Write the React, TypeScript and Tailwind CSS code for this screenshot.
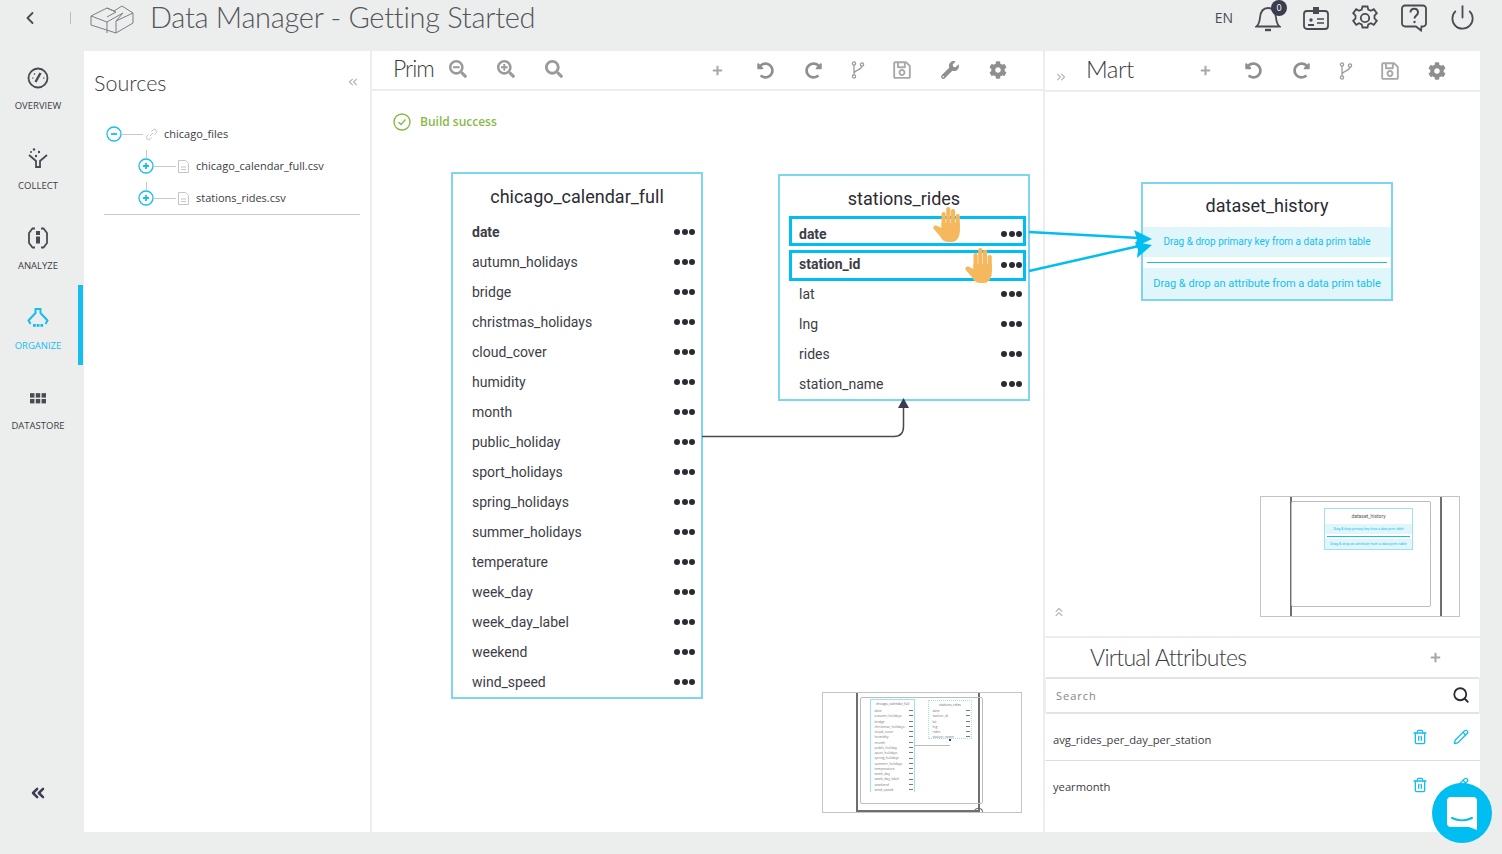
import React from "react";
import {
    FaCog,
    FaPlus,
    FaRedoAlt,
    FaRegSave,
    FaSearch,
    FaSearchMinus,
    FaSearchPlus,
    FaUndoAlt,
    FaWrench,
} from "react-icons/fa";
import { ChevronLeft, ChevronsLeft, ChevronsRight, ChevronsUp, Power, Search, Trash2, Pencil } from "lucide-react";

const calendarCols = [
    "date",
    "autumn_holidays",
    "bridge",
    "christmas_holidays",
    "cloud_cover",
    "humidity",
    "month",
    "public_holiday",
    "sport_holidays",
    "spring_holidays",
    "summer_holidays",
    "temperature",
    "week_day",
    "week_day_label",
    "weekend",
    "wind_speed",
];
const ridesCols = ["date", "station_id", "lat", "lng", "rides", "station_name"];

function Dots() {
    return (
        <div className="flex gap-[1.5px]">
            <span className="w-[6px] h-[6px] rounded-full bg-[#2b2b33]" />
            <span className="w-[6px] h-[6px] rounded-full bg-[#2b2b33]" />
            <span className="w-[6px] h-[6px] rounded-full bg-[#2b2b33]" />
        </div>
    );
}

function BranchIcon() {
    return (
        <svg width="14" height="18" viewBox="0 0 14 18" fill="none" stroke="#9b9b9b" strokeWidth="1.3">
            <circle cx="3" cy="2.5" r="1.6" />
            <circle cx="11" cy="3.5" r="1.6" />
            <circle cx="3" cy="15.5" r="1.6" />
            <path d="M3 4.1V13.9M11 5.1C11 9 4 8.5 3 12" />
        </svg>
    );
}

function Hand() {
    return (
        <svg width="32" height="36" viewBox="0 0 32 36" fill="#f6b85c">
            <rect x="9.500" y="6" width="4.200" height="20" rx="2.100" />
            <rect x="14.200" y="1" width="4.200" height="24" rx="2.100" />
            <rect x="18.900" y="3" width="4.200" height="22" rx="2.100" />
            <rect x="23.600" y="8" width="4.200" height="18" rx="2.100" />
            <path d="M9.500 17h18.300v8c0 6-3 11-8 11h-4c-4 0-6-3-8-6l-6-7c-1.500-2 1-4.500 3.500-3l4.200 2z" />
        </svg>
    );
}

function NodeRow({ name, bold, boxed, extra }: { name: string; bold?: boolean; boxed?: boolean; extra?: string }) {
    return (
        <div
            className={`flex items-center justify-between h-[30px] text-[14px] text-[#3d3d47] ${
                bold ? "font-bold" : ""
            } ${boxed ? "ml-[9px] mr-[2px] border-[3px] border-[#00bdf2] pl-[7px] pr-[1px]" : "pl-[19px] pr-[6px]"} ${extra ?? ""}`}
        >
            <span>{name}</span>
            <Dots />
        </div>
    );
}

function Toolbar({ wrench }: { wrench?: boolean }) {
    return (
        <>
            <FaPlus size={11} className="text-[#a8a8a8]" />
            <FaUndoAlt size={17} className="text-[#8f8f8f] ml-[34px]" />
            <FaRedoAlt size={17} className="text-[#8f8f8f] ml-[31px]" />
            <div className="ml-[29px]">
                <BranchIcon />
            </div>
            <FaRegSave size={20} className="text-[#a8a8a8] ml-[27px]" />
            {wrench && <FaWrench size={18} className="text-[#8f8f8f] ml-[29px]" />}
            <FaCog size={18} className={`text-[#8f8f8f] ${wrench ? "ml-[30px]" : "ml-[28px]"}`} />
        </>
    );
}

function OverviewIcon() {
    return (
        <svg width="22" height="22" viewBox="0 0 22 22" fill="none" stroke="#4a4a52" strokeWidth="1.8">
            <circle cx="11" cy="11" r="9.500" />
            <path d="M8.500 15L13.500 6" strokeWidth="2.400" />
            <path d="M5 11h1.500M7 6.500l1 1M16 11h1.500" strokeWidth="1.200" />
        </svg>
    );
}

function CollectIcon() {
    return (
        <svg width="22" height="22" viewBox="0 0 22 22" fill="none" stroke="#4a4a52" strokeWidth="1.800">
            <path d="M2 8l7 6v6h4v-6l7-6" />
            <circle cx="7" cy="2.500" r="1.200" fill="#4a4a52" stroke="none" />
            <circle cx="12" cy="5" r="1.200" fill="#4a4a52" stroke="none" />
            <circle cx="9" cy="9" r="1.200" fill="#4a4a52" stroke="none" />
            <circle cx="4" cy="5" r="1" fill="#4a4a52" stroke="none" />
        </svg>
    );
}

function AnalyzeIcon() {
    return (
        <svg width="20" height="22" viewBox="0 0 20 22" fill="none" stroke="#4a4a52" strokeWidth="1.800">
            <path d="M7 1.500H4.500L1 6v10l3.500 4.500H7M13 1.500h2.500L19 6v10l-3.500 4.500H13" />
            <rect x="8" y="4" width="4" height="4" fill="#4a4a52" stroke="none" />
            <rect x="8" y="9.500" width="4" height="7" fill="#4a4a52" stroke="none" />
        </svg>
    );
}

function OrganizeIcon() {
    return (
        <svg width="22" height="22" viewBox="0 0 22 22" fill="none" stroke="#18bdf0" strokeWidth="2">
            <path d="M7.500 2h7M8.500 2v4L1.500 13.500 3.500 17M13.500 2v4l7 7.500-2 3.500" />
            <rect x="6" y="17" width="2.800" height="2.800" fill="#18bdf0" stroke="none" />
            <rect x="9.700" y="17" width="2.800" height="2.800" fill="#18bdf0" stroke="none" />
            <rect x="13.400" y="17" width="2.800" height="2.800" fill="#18bdf0" stroke="none" />
        </svg>
    );
}

function DatastoreIcon() {
    return (
        <svg width="16" height="11" viewBox="0 0 18 12" fill="#4a4a52">
            <rect x="0" y="0" width="5" height="5" />
            <rect x="6.500" y="0" width="5" height="5" />
            <rect x="13" y="0" width="5" height="5" />
            <rect x="0" y="6.500" width="5" height="5" />
            <rect x="6.500" y="6.500" width="5" height="5" />
            <rect x="13" y="6.500" width="5" height="5" />
        </svg>
    );
}

function SideItem({ label, icon, active }: { label: string; icon: React.ReactNode; active?: boolean }) {
    return (
        <div className="flex h-[80px] w-[83px]">
            <div
                className={`w-[76px] flex flex-col items-center pt-[22px] text-[9.500px] leading-[14px] ${
                    active ? "text-[#18bdf0]" : "text-[#3c3c44]"
                }`}
            >
                <div className="h-[22px] flex items-center">{icon}</div>
                <span className="mt-[10px]">{label}</span>
            </div>
            {active && <div className="ml-[2px] w-[5px] bg-[#18bdf0]" />}
        </div>
    );
}

function Circle({ minus }: { minus?: boolean }) {
    return (
        <svg width="16" height="16" viewBox="0 0 16 16" fill="none">
            <circle cx="8" cy="8" r="7" stroke="#18bdf0" strokeWidth="1.300" />
            <path d={minus ? "M5 8h6" : "M5 8h6M8 5v6"} stroke="#18bdf0" strokeWidth="1.800" />
        </svg>
    );
}

function FileIcon() {
    return (
        <svg width="11" height="13" viewBox="0 0 11 13" fill="none" stroke="#c4c4c4">
            <path d="M.5.5h7l3 3v9H.500zM3 7h5M3 9.500h5" />
        </svg>
    );
}

function TreeRow({ name }: { name: string }) {
    return (
        <div className="relative flex items-center h-[32px] pl-[34px]">
            <div className="absolute left-[42px] top-0 w-px h-[8px] bg-[#c8c8c8]" />
            <Circle />
            <div className="w-[22px] h-px bg-[#c8c8c8]" />
            <div className="ml-[2px]">
                <FileIcon />
            </div>
            <span className="ml-[7px]">{name}</span>
        </div>
    );
}

function MiniMap({ className, children }: { className: string; children: React.ReactNode }) {
    return <div className={`absolute w-[200px] h-[121px] border border-[#c4c4c4] bg-white ${className}`}>{children}</div>;
}

function MiniRows({ names }: { names: string[] }) {
    return (
        <div className="pl-[3.500px] pr-[1px]">
            {names.map((n) => (
                <div key={n} className="flex items-center justify-between h-[5.270px] text-[3.400px] leading-[5.270px] text-[#77777c]">
                    <span>{n}</span>
                    <div className="w-[4px] h-px bg-[#77777c]" />
                </div>
            ))}
        </div>
    );
}

export default function App() {
    const bodyFont = { fontFamily: '"Open Sans", sans-serif' };
    const thinFont = "font-['Lato',sans-serif] font-light";
    const rootClass = "relative w-[1502px] h-[854px] overflow-hidden bg-[#eceeee] text-[#3c3c44]";

    return (
        <div className={rootClass} style={bodyFont}>
            {/* top bar */}
            <header className="flex items-center h-[51px] pb-[16px]">
                <ChevronLeft size={20} strokeWidth={2.200} className="ml-[20px] text-[#4a4a52]" />
                <div className="ml-[30px] w-px h-[12px] bg-[#bdbdbd]" />
                <svg className="ml-[19px]" width="44" height="32" viewBox="0 0 44 32" fill="none" stroke="#7d7d83" strokeWidth="1">
                    <path d="M1 14L17 6l7 3 8-5 11 7v10L26 31 1 23zM1 14l16 6v11M17 20l16-9M26 31V19l17-8M17 6l9 4-9 5M33 11l-7 8" />
                </svg>
                <h1 className={`ml-[16px] text-[29px] leading-[36px] tracking-[-0.3px] whitespace-nowrap text-[#55555b] -mt-[2px] ${thinFont}`}>
                    Data Manager - Getting Started
                </h1>
                <div className="ml-auto flex items-center pr-[26px] text-[#4a4a52]">
                    <span className="text-[14px]">EN</span>
                    <div className="relative ml-[22px]">
                        <svg width="26" height="28" viewBox="0 0 26 28" fill="none" stroke="#4a4a52" strokeWidth="1.800">
                            <path d="M1.500 22.500c2.500-2 3-4 3.500-9C5.500 8 8 4 13 4s7.500 4 8 9.500c.5 5 1 7 3.500 9z" />
                            <path d="M10 26h6" strokeWidth="2.400" />
                        </svg>
                        <div className="absolute -top-[4px] -right-[6px] w-[16px] h-[16px] rounded-full bg-[#3c3c50] text-white text-[9px] leading-[16px] text-center">
                            0
                        </div>
                    </div>
                    <svg className="ml-[22px]" width="26" height="26" viewBox="0 0 26 26" fill="none" stroke="#4a4a52" strokeWidth="1.800">
                        <rect x="1" y="6" width="24" height="18" rx="3" />
                        <rect x="10" y="2" width="6" height="7" fill="#4a4a52" stroke="none" />
                        <circle cx="8" cy="15" r="1.700" fill="#4a4a52" stroke="none" />
                        <path d="M5 20h6" strokeWidth="2" />
                        <path d="M14 14h7M14 18h7" strokeWidth="1.300" />
                    </svg>
                    <svg className="ml-[23px]" width="26" height="26" viewBox="0 0 26 26" fill="none" stroke="#4a4a52" strokeWidth="1.800">
                        <path d="M10.500 1.500h5l.8 3.200 2.600 1.100 2.900-1.600 3 4-2.300 2.300v3l2.300 2.300-3 4-2.900-1.600-2.600 1.100-.8 3.200h-5l-.8-3.200-2.600-1.100-2.900 1.600-3-4 2.300-2.300v-3L1.200 8.200l3-4 2.900 1.600 2.600-1.100z" />
                        <circle cx="13" cy="13" r="4.200" />
                    </svg>
                    <svg className="ml-[23px]" width="26" height="28" viewBox="0 0 26 28" fill="none" stroke="#4a4a52" strokeWidth="1.800">
                        <path d="M4 1.500h18a3 3 0 0 1 3 3v15a3 3 0 0 1-3 3h-1.500l-.5 4-5-4H4a3 3 0 0 1-3-3v-15a3 3 0 0 1 3-3z" />
                        <path d="M9.500 8.500c0-5 7.500-5 7.500 0 0 3-3.500 3-3.500 6" strokeWidth="2" />
                        <circle cx="13.500" cy="18" r="1.200" fill="#4a4a52" stroke="none" />
                    </svg>
                    <Power size={27} strokeWidth={1.600} className="ml-[22px]" />
                </div>
            </header>

            <div className="flex">
                {/* sidebar */}
                <nav className="relative w-[84px] h-[781px] shrink-0">
                    <div className="-mt-[6px]">
                        <SideItem label="OVERVIEW" icon={<OverviewIcon />} />
                        <SideItem label="COLLECT" icon={<CollectIcon />} />
                        <SideItem label="ANALYZE" icon={<AnalyzeIcon />} />
                        <SideItem label="ORGANIZE" icon={<OrganizeIcon />} active />
                        <SideItem label="DATASTORE" icon={<DatastoreIcon />} />
                    </div>
                    <ChevronsLeft size={20} strokeWidth={3} className="absolute left-[28px] top-[732px] text-[#3c3c50]" />
                </nav>

                {/* sources */}
                <section className="w-[286px] h-[781px] bg-white shrink-0">
                    <div className="flex items-center justify-between h-[64px] pl-[10px] pr-[10px]">
                        <h2 className={`text-[21.500px] text-[#3c3c44] mt-[1px] ${thinFont}`}>Sources</h2>
                        <ChevronsLeft size={14} className="text-[#b4b4b4] -mt-[2px]" />
                    </div>
                    <div className="mx-[20px] mt-[3px] w-[256px] border-b border-[#c8c8c8] text-[11px] text-[#3c3c44]">
                        <div className="flex items-center h-[32px] pl-[2px]">
                            <Circle minus />
                            <div className="w-[21px] h-px bg-[#c8c8c8]" />
                            <svg className="ml-[2px]" width="13" height="13" viewBox="0 0 13 13" fill="none" stroke="#c4c4c4">
                                <path d="M5 8l3-3M3.500 6.500L2 8a2 2 0 0 0 3 3l1.500-1.500M6.500 3.500L8 2a2 2 0 0 1 3 3L9.500 6.500" />
                            </svg>
                            <span className="ml-[6px]">chicago_files</span>
                        </div>
                        <TreeRow name="chicago_calendar_full.csv" />
                        <TreeRow name="stations_rides.csv" />
                    </div>
                </section>

                {/* prim */}
                <section className="w-[671px] h-[781px] ml-[2px] bg-white shrink-0 flex flex-col">
                    <div className="flex items-center h-[38px] pl-[21px] shrink-0">
                        <span className={`text-[23px] tracking-[-1px] w-[54px] -mt-[3px] ${thinFont}`}>Prim</span>
                        <FaSearchMinus size={18} className="text-[#9b9b9b] ml-[2px] -mt-[2px]" />
                        <FaSearchPlus size={18} className="text-[#9b9b9b] ml-[30px] -mt-[2px]" />
                        <FaSearch size={18} className="text-[#9b9b9b] ml-[30px] -mt-[2px]" />
                        <div className="ml-[149px] flex items-center">
                            <Toolbar wrench />
                        </div>
                    </div>
                    <div className="h-[2px] bg-[#eceeee] shrink-0" />
                    <div className="relative flex-1">
                        <div className="flex items-center pl-[21px] pt-[22px] gap-[9px]">
                            <svg width="18" height="18" viewBox="0 0 18 18" fill="none" stroke="#8ab84a" strokeWidth="1.400">
                                <circle cx="9" cy="9" r="8" />
                                <path d="M5.500 9.200L8 11.500l4.500-5" />
                            </svg>
                            <span className="text-[12px] font-semibold text-[#8ab84a]">Build success</span>
                        </div>

                        <div className="absolute left-[79px] top-[81px] w-[252px] h-[527px] border-2 border-[#7dd6f0] font-['Roboto',sans-serif]">
                            <div className="h-[43px] pt-[11px] text-center text-[18px] leading-[24px] text-[#2b2b33]">chicago_calendar_full</div>
                            {calendarCols.map((c, i) => (
                                <NodeRow key={c} name={c} bold={i === 0} />
                            ))}
                        </div>

                        <div className="absolute left-[406px] top-[83px] w-[252px] h-[227px] border-2 border-[#7dd6f0] font-['Roboto',sans-serif]">
                            <div className="h-[40px] pt-[11px] text-center text-[18px] leading-[24px] text-[#2b2b33]">stations_rides</div>
                            <div className="flex flex-col gap-[4px] -mb-[2px]">
                                <NodeRow name="date" bold boxed extra="pt-[6px]" />
                                <NodeRow name="station_id" bold boxed extra="pb-[2px] !h-[31px]" />
                            </div>
                            {ridesCols.slice(2).map((c) => (
                                <NodeRow key={c} name={c} />
                            ))}
                        </div>

                        {/* link between the two prim tables */}
                        <svg className="absolute left-[330px] top-[304px]" width="210" height="50" viewBox="0 0 210 50" fill="none">
                            <path d="M0 41.500h192q9.500 0 9.500-10V12" stroke="#4a4a55" strokeWidth="1.500" />
                            <path d="M201.500 3l5.500 10h-11z" fill="#3c3c50" />
                        </svg>

                        <div className="absolute left-[560px] top-[115px]">
                            <Hand />
                        </div>
                        <div className="absolute left-[592px] top-[156px]">
                            <Hand />
                        </div>

                        <MiniMap className="left-[450px] top-[601px]">
                            <div className="absolute left-[33px] top-0 w-[2px] h-full bg-[#6e6e74]" />
                            <div className="absolute left-[155px] top-0 w-[2px] h-full bg-[#6e6e74]" />
                            <div className="absolute left-[37px] top-[4px] w-[123px] h-[107px] border border-[#bdbdbd] rounded-[2px]" />
                            <div className="absolute left-[47px] top-[6px] w-[45px] h-[93px] border-x border-t border-[#9fe0f3]">
                                <div className="text-center text-[3.400px] leading-[8px] text-[#666]">chicago_calendar_full</div>
                                <MiniRows names={calendarCols} />
                            </div>
                            <div className="absolute left-[105px] top-[7px] w-[44px] h-[39px] border border-dotted border-[#9fe0f3]">
                                <div className="text-center text-[3.400px] leading-[7px] text-[#666]">stations_rides</div>
                                <MiniRows names={ridesCols} />
                            </div>
                            <div className="absolute left-[92px] top-[52px] w-[35px] h-[2px] border-t border-[#bdbdbd]" />
                            <div className="absolute left-[126px] top-[46px] w-[2px] h-[2px] bg-[#3c3c50]" />
                            <div className="absolute left-[151px] bottom-0 w-[9px] h-[4px] rounded-t-full border border-b-0 border-[#6e6e74]" />
                            <div className="absolute left-[33px] bottom-0 w-[124px] h-[2px] bg-[#6e6e74]" />
                        </MiniMap>
                    </div>
                </section>

                {/* mart */}
                <section className="w-[435px] h-[781px] ml-[2px] bg-white shrink-0 flex flex-col">
                    <div className="flex items-center h-[39px] pl-[9px] shrink-0">
                        <ChevronsRight size={14} className="text-[#b4b4b4] mt-[12px]" />
                        <span className={`ml-[18px] w-[48px] text-[24px] tracking-[-0.5px] -mt-[3px] ${thinFont}`}>Mart</span>
                        <div className="ml-[66px] flex items-center">
                            <Toolbar />
                        </div>
                    </div>
                    <div className="h-[2px] bg-[#eceeee] shrink-0" />
                    <div className="relative h-[544px] shrink-0">
                        <div className="absolute left-[96px] top-[90px] w-[252px] h-[119px] border-2 border-[#7dd6f0] font-['Roboto',sans-serif]">
                            <div className="h-[43px] pt-[11px] text-center text-[18px] leading-[22px] text-[#2b2b33]">dataset_history</div>
                            <div className="h-[30px] bg-[#e0f6fb] text-center text-[10px] leading-[30px] text-[#18bdf0]">
                                Drag &amp; drop primary key from a data prim table
                            </div>
                            <div className="h-[11px] flex items-center justify-center">
                                <div className="w-[240px] h-px bg-[#18bdf0]" />
                            </div>
                            <div className="h-[31px] bg-[#e0f6fb] text-center text-[11px] leading-[31px] text-[#18bdf0]">
                                Drag &amp; drop an attribute from a data prim table
                            </div>
                        </div>
                        <MiniMap className="left-[215px] top-[404px]">
                            <div className="absolute left-[29px] top-0 w-[2px] h-full bg-[#6e6e74]" />
                            <div className="absolute left-[179px] top-0 w-[2px] h-full bg-[#6e6e74]" />
                            <div className="absolute left-[30px] top-[4px] w-[140px] h-[106px] border border-[#bdbdbd] rounded-[2px]" />
                            <div className="absolute left-[63px] top-[11px] w-[89px] h-[42px] border border-[#9fe0f3] text-center bg-white font-['Roboto',sans-serif]">
                                <div className="text-[5px] leading-[15px] text-[#555]">dataset_history</div>
                                <div className="h-[10px] bg-[#e0f6fb] text-[3.400px] leading-[10px] text-[#18bdf0]">Drag &amp; drop primary key from a data prim table</div>
                                <div className="mx-[2px] my-[2px] h-px bg-[#18bdf0]" />
                                <div className="h-[10px] bg-[#e0f6fb] text-[3.700px] leading-[10px] text-[#18bdf0]">Drag &amp; drop an attribute from a data prim table</div>
                            </div>
                        </MiniMap>
                        <ChevronsUp size={14} className="absolute left-[7px] top-[513px] text-[#b4b4b4]" />
                    </div>
                    <div className="h-[2px] bg-[#eceeee] shrink-0" />
                    <div className="flex items-center justify-between h-[39px] pl-[45px] pr-[39px] shrink-0">
                        <span className={`text-[23px] tracking-[-0.7px] whitespace-nowrap ${thinFont}`}>Virtual Attributes</span>
                        <FaPlus size={11} className="text-[#a8a8a8]" />
                    </div>
                    <div className="flex items-center justify-between h-[37px] pl-[10px] pr-[9px] border-y-2 border-[#e2e4e4] border-x border-x-[#eceeee] rounded-[2px] shrink-0">
                        <span className="text-[11px] tracking-[1px] text-[#85858a] mt-[1px]">Search</span>
                        <Search size={18} strokeWidth={2.400} className="text-[#2b2b33] -mt-[2px]" />
                    </div>
                    <div className="flex items-center justify-between h-[47px] pl-[8px] pr-[11px] border-b border-[#dcdede] text-[11.200px] shrink-0">
                        <span className="mt-[6px]">avg_rides_per_day_per_station</span>
                        <div className="flex items-center gap-[25px]">
                            <Trash2 size={16} strokeWidth={2} className="text-[#18bdf0]" />
                            <Pencil size={16} strokeWidth={2} className="text-[#18bdf0]" />
                        </div>
                    </div>
                    <div className="flex items-center justify-between h-[47px] pl-[8px] pr-[11px] text-[11.200px] shrink-0">
                        <span className="mt-[6px]">yearmonth</span>
                        <div className="flex items-center gap-[25px]">
                            <Trash2 size={16} strokeWidth={2} className="text-[#18bdf0]" />
                            <Pencil size={16} strokeWidth={2} className="text-[#18bdf0]" />
                        </div>
                    </div>
                </section>
            </div>

            {/* arrows from the stations_rides table to the mart table */}
            <svg className="absolute left-[1028px] top-[222px]" width="130" height="56" viewBox="0 0 130 56" fill="none">
                <path d="M1 10l110 6" stroke="#00bdf2" strokeWidth="2.500" />
                <path d="M1 49l110-25" stroke="#00bdf2" strokeWidth="2.500" />
                <path d="M124 17l-18-9 3 9-2 8zM124 23l-17-3 3 8-1 8z" fill="#00bdf2" />
            </svg>

            {/* chat launcher */}
            <div className="absolute left-[1432px] top-[783px] w-[60px] h-[60px] rounded-full bg-[#00bdf2] flex items-center justify-center">
                <svg width="30" height="33" viewBox="0 0 30 33" fill="none">
                    <path d="M4 0h22a4 4 0 0 1 4 4v29l-8-3H4a4 4 0 0 1-4-4V4a4 4 0 0 1 4-4z" fill="#ffffff" />
                    <path d="M5 21c6 3 14 3 20 0" stroke="#00bdf2" strokeWidth="2" strokeLinecap="round" />
                </svg>
            </div>
        </div>
    );
}
